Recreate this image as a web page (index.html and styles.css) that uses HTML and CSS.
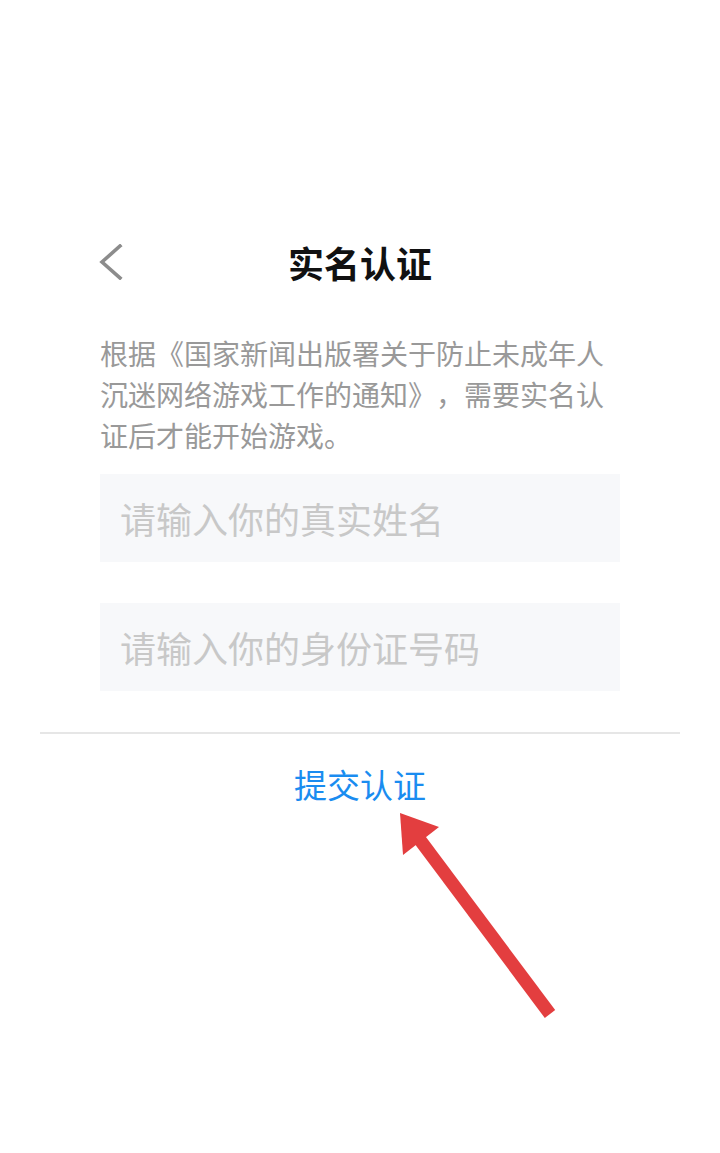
FILE: index.html
```html
<!DOCTYPE html>
<html lang="zh">
<head>
	<meta charset="UTF-8" />
	<meta name="viewport" content="width=device-width, initial-scale=1.0" />
	<title>实名认证</title>
	<link rel="stylesheet" href="styles.css">
</head>
<body>
	<div class="dialog">
		<div class="head">
			<span class="back">
				<svg width="24" height="36" viewBox="0 0 24 36"><polyline points="21,2 3,18 21,34" fill="none" stroke="#8c8c8c" stroke-width="3.6" stroke-linecap="square"/></svg>
			</span>
			<h1>实名认证</h1>
		</div>
		<div class="body">
			<p class="tip">根据《国家新闻出版署关于防止未成年人沉迷网络游戏工作的通知》，需要实名认证后才能开始游戏。</p>
			<input class="field" type="text" placeholder="请输入你的真实姓名">
			<input class="field" type="text" placeholder="请输入你的身份证号码">
		</div>
		<div class="foot">
			<a class="submit" href="#">提交认证</a>
		</div>
	</div>
	<!-- 标注箭头 -->
	<svg class="mark" width="720" height="1153" viewBox="0 0 720 1153">
		<line x1="417" y1="836" x2="550" y2="1014" stroke="#e33e3f" stroke-width="13"/>
		<polygon points="400,813 439,827 403,855" fill="#e33e3f"/>
	</svg>
</body>
</html>
```

FILE: styles.css
```css
*{margin: 0;padding: 0;box-sizing: border-box;}
html,body{background: #fff;}
body{
	font-family: "Noto Sans CJK SC", "Noto Sans", sans-serif;
	position: relative;min-height: 1153px;
	text-spacing-trim: space-all;
}
.dialog{
	width: 640px;margin: 0 auto;padding-top: 222px;
}
.head{
	height: 80px;position: relative;
	display: flex;align-items: center;justify-content: center;
}
.head h1{font-size: 36px;font-weight: bold;color: #111;line-height: 1;}
.back{
	position: absolute;left: 59px;top: 22px;
	display: block;width: 24px;height: 36px;
}
.back svg{display: block;}
.body{padding: 31px 60px 41px;}
.tip{
	font-size: 28px;line-height: 41px;color: #999;
	margin-bottom: 18px;
}
.field{
	display: block;width: 520px;height: 88px;
	border: none;outline: none;background: #f7f8fa;
	padding: 0 20px;font-size: 36px;color: #333;
	font-family: "Noto Sans CJK SC", "Noto Sans", sans-serif;
}
.field::placeholder{color: #c8c8c8;}
.field + .field{margin-top: 41px;}
.foot{
	border-top: 2px solid #e6e6e6;height: 102px;
	display: flex;align-items: center;justify-content: center;
}
.submit{font-size: 33px;color: #1a8cf0;text-decoration: none;}
.mark{position: absolute;top: 0;left: 0;pointer-events: none;}
```
